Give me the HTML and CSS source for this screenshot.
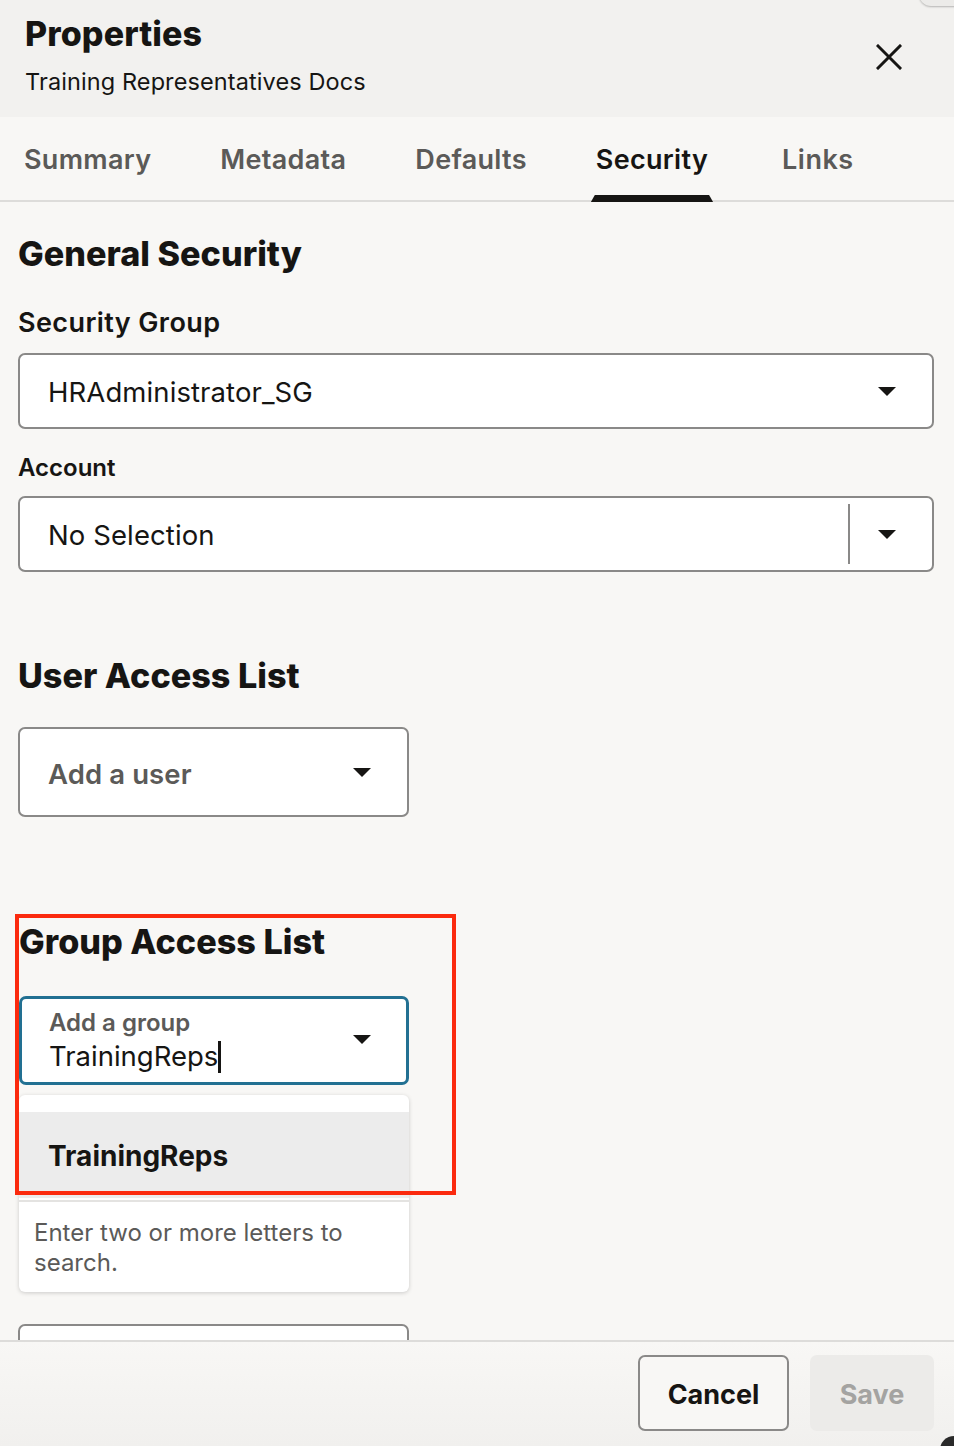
FILE: index.html
```html
<!DOCTYPE html>
<html lang="en">
<head>
<meta charset="utf-8">
<title>Properties</title>
<link rel="stylesheet" href="styles.css">
</head>
<body>
<div class="dialog">
  <header class="header">
    <div class="titles">
      <h1 class="title">Properties</h1>
      <div class="subtitle">Training Representatives Docs</div>
    </div>
    <button class="close" aria-label="Close">
      <svg width="26" height="26" viewBox="0 0 26 26"><path d="M2 2 L24 24 M24 2 L2 24" stroke="#161513" stroke-width="3" stroke-linecap="square" fill="none"/></svg>
    </button>
    <div class="corner-tr"></div>
  </header>

  <nav class="tabs">
    <div class="tab">Summary</div>
    <div class="tab">Metadata</div>
    <div class="tab">Defaults</div>
    <div class="tab active">Security</div>
    <div class="tab last">Links</div>
  </nav>

  <main class="content">
    <h2 class="heading first">General Security</h2>

    <div class="label label-lg">Security Group</div>
    <div class="select full">
      <span class="value">HRAdministrator_SG</span>
      <span class="caret"></span>
    </div>

    <div class="label label-sm">Account</div>
    <div class="select full">
      <span class="value">No Selection</span>
      <span class="divider"></span>
      <span class="caret"></span>
    </div>

    <h2 class="heading user-heading">User Access List</h2>
    <div class="select small">
      <span class="value placeholder">Add a user</span>
      <span class="caret"></span>
    </div>

    <section class="group-section">
      <h2 class="heading group-heading">Group Access List</h2>
      <div class="group-field">
        <div class="select small focused">
          <div class="stack">
            <span class="float-label">Add a group</span>
            <span class="value typed">TrainingReps<span class="cursor"></span></span>
          </div>
          <span class="caret"></span>
        </div>
        <div class="help">Enter two or more letters to search.</div>
        <div class="popup">
          <div class="option">TrainingReps</div>
          <div class="popup-sep"></div>
          <div class="popup-help">Enter two or more letters to search.</div>
        </div>
      </div>
      <div class="annotation"></div>
      <div class="select small next"></div>
    </section>
  </main>

  <footer class="footer">
    <button class="btn cancel">Cancel</button>
    <button class="btn save" disabled>Save</button>
    <div class="corner-br"></div>
  </footer>
</div>
</body>
</html>
```

FILE: styles.css
```css
* { box-sizing: border-box; }
html, body {
  margin: 0;
  padding: 0;
  height: 100%;
}
body {
  font-family: Inter, "Noto Sans", "Liberation Sans", sans-serif;
  color: #161513;
  background: #f8f7f5;
}
.dialog {
  height: 1446px;
  display: flex;
  flex-direction: column;
  overflow: hidden;
  position: relative;
}

/* Header */
.header {
  background: #f2f1ef;
  height: 117px;
  display: flex;
  align-items: flex-start;
  justify-content: space-between;
  padding: 14px 52px 0 25px;
  position: relative;
  flex-shrink: 0;
}
.title {
  margin: 0;
  font-size: 34px;
  line-height: 40px;
  font-weight: 800;
  letter-spacing: 0.1px;
}
.subtitle {
  margin-top: 14px;
  font-size: 23.5px;
  line-height: 28px;
  font-weight: 400;
  letter-spacing: 0.1px;
}
.close {
  background: none;
  border: 0;
  padding: 0;
  margin-top: 30px;
  width: 26px;
  height: 26px;
  cursor: pointer;
}
.corner-tr {
  position: absolute;
  top: -8px;
  right: -20px;
  width: 55px;
  height: 14px;
  border-radius: 0 0 0 12px;
  background: #ecebe9;
  box-shadow: 0 1px 2px rgba(0,0,0,0.25);
}

/* Tabs */
.tabs {
  height: 85px;
  display: flex;
  align-items: stretch;
  padding-left: 24px;
  border-bottom: 2px solid #dddcda;
  flex-shrink: 0;
}
.tab {
  position: relative;
  display: flex;
  align-items: center;
  font-size: 27px;
  font-weight: 600;
  color: #5b5a58;
  margin-right: 69px;
  padding-top: 2px;
  letter-spacing: 0.3px;
}
.tab.last {
  margin-left: 5px;
  letter-spacing: 0.5px;
}
.tab.active {
  color: #161513;
}
.tab.active::after {
  content: "";
  position: absolute;
  left: -5px;
  right: -5px;
  bottom: -2px;
  height: 7px;
  background: #161513;
  clip-path: polygon(4px 0, calc(100% - 4px) 0, 100% 100%, 0 100%);
}

/* Content */
.content {
  flex: 1;
  overflow: hidden;
  padding: 32px 20px 0 18px;
  position: relative;
}
.heading {
  margin: 0;
  font-size: 34.2px;
  line-height: 40px;
  font-weight: 800;
  letter-spacing: 0;
}
.label {
  font-weight: 600;
}
.label-lg {
  margin-top: 33px;
  font-size: 27px;
  line-height: 32px;
  letter-spacing: 0.4px;
}
.label-sm {
  margin-top: 25px;
  font-size: 24px;
  line-height: 28px;
}
.select {
  margin-top: 14px;
  background: #fff;
  border: 2px solid #8a8988;
  border-radius: 7px;
  display: flex;
  align-items: center;
  position: relative;
  padding-left: 28px;
}
.select.full {
  height: 76px;
  width: 916px;
}
.select.small {
  width: 391px;
  height: 90px;
}
.value {
  flex: 1;
  font-size: 27.5px;
  line-height: 32px;
  font-weight: 400;
  color: #161513;
  padding-top: 2px;
  letter-spacing: 0.1px;
}
.placeholder {
  color: #5b5a58;
  font-weight: 600;
  font-size: 27.5px;
  padding-top: 4px;
}
.caret {
  width: 0;
  height: 0;
  border-left: 9px solid transparent;
  border-right: 9px solid transparent;
  border-top: 9px solid #161513;
  margin-right: 36px;
  margin-left: 28px;
}
.divider {
  width: 2px;
  height: 60px;
  background: #8a8988;
}
.user-heading {
  margin-top: 84px;
}
.user-heading + .select {
  margin-top: 31px;
}

/* Group section */
.group-section {
  position: relative;
  margin-top: 105px;
}
.group-heading {
  padding-left: 1px;
}
.group-field {
  position: relative;
}
.select.focused {
  margin-top: 34px;
  margin-left: 1px;
  width: 390px;
  height: 89px;
  border: 3px solid #227092;
  padding-left: 27px;
}
.stack {
  flex: 1;
  display: flex;
  flex-direction: column;
  padding-top: 0;
}
.float-label {
  font-size: 24px;
  line-height: 28px;
  font-weight: 600;
  color: #5b5a58;
}
.typed {
  position: relative;
  line-height: 34px;
  margin-top: 2px;
  padding-top: 0;
  letter-spacing: 0;
}
.cursor {
  display: inline-block;
  width: 3px;
  height: 32px;
  background: #161513;
  vertical-align: -7px;
}
.select.focused .caret {
  margin-right: 35px;
  margin-top: -2px;
}
.help {
  width: 390px;
  margin-top: 8px;
  padding-left: 16px;
  font-size: 24px;
  line-height: 28px;
  color: #5b5a58;
}
.popup {
  position: absolute;
  z-index: 2;
  left: 1px;
  top: 99px;
  width: 390px;
  background: #fff;
  border-radius: 6px;
  box-shadow: 0 1px 4px rgba(0,0,0,0.18);
  padding-top: 17px;
  padding-bottom: 14px;
}
.option {
  background: #ececec;
  height: 86px;
  display: flex;
  align-items: center;
  padding-left: 29px;
  padding-top: 2px;
  font-size: 28px;
  font-weight: 700;
  color: #161513;
}
.popup-sep {
  height: 2px;
  background: #e4e3e1;
  margin-top: 2px;
}
.popup-help {
  padding: 16px 20px 0 15px;
  font-size: 24px;
  line-height: 30px;
  color: #5b5a58;
}
.annotation {
  position: absolute;
  z-index: 3;
  left: -3px;
  top: -8px;
  width: 441px;
  height: 281px;
  border: 4px solid #fb2a0e;
  pointer-events: none;
}
.select.next {
  margin-top: 175px;
  height: 60px;
}

/* Footer */
.footer {
  height: 106px;
  flex-shrink: 0;
  border-top: 2px solid #dddcda;
  background: linear-gradient(#f8f7f5, #f1f0ee);
  display: flex;
  align-items: center;
  justify-content: flex-end;
  padding: 0 20px 2px 0;
  gap: 21px;
  position: relative;
}
.btn {
  font-family: inherit;
  font-size: 27px;
  font-weight: 700;
  height: 76px;
  border-radius: 7px;
  cursor: pointer;
  padding-top: 3px;
}
.cancel {
  width: 151px;
  background: #f8f7f5;
  border: 2px solid #8a8988;
  color: #161513;
}
.save {
  width: 124px;
  background: #ecebe9;
  border: 0;
  color: #a4a3a1;
}
.corner-br {
  position: absolute;
  right: -4px;
  bottom: -4px;
  width: 18px;
  height: 14px;
  background: #2a2a2a;
  border-radius: 14px 0 0 0;
}
```
